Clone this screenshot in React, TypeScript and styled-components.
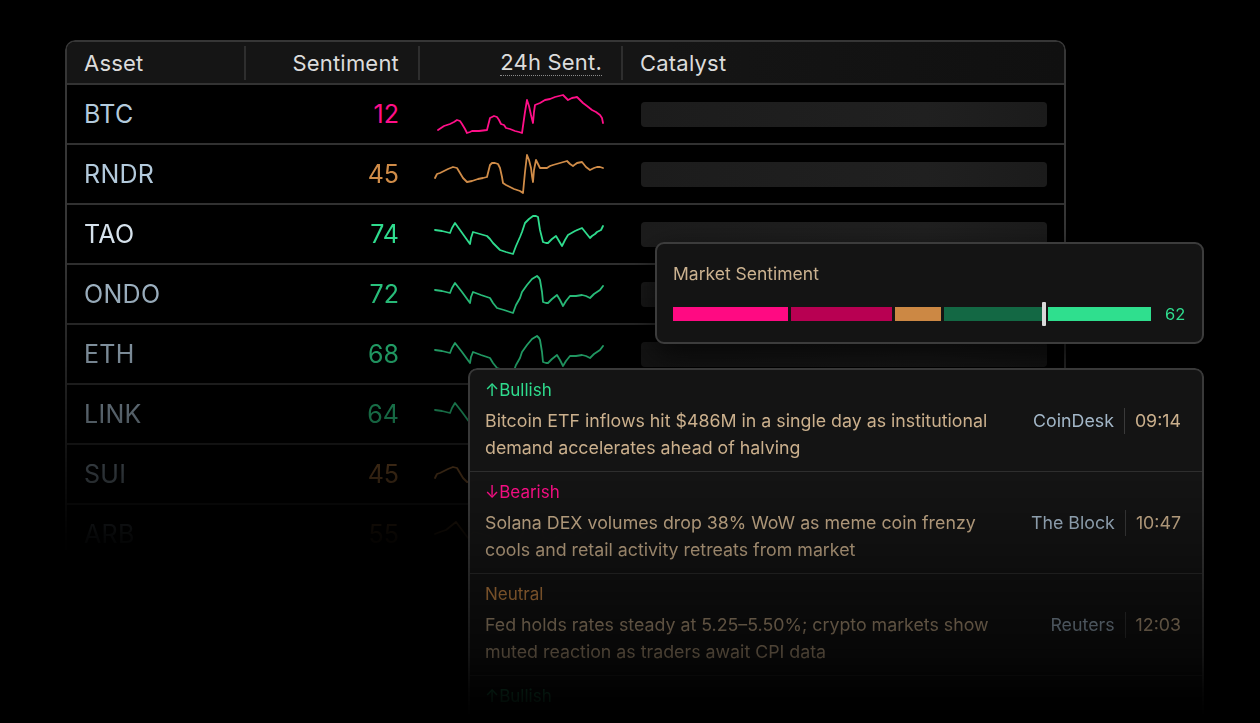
import { createGlobalStyle, styled } from "styled-components";

const GlobalStyle = createGlobalStyle`
  body {
    margin: 0;
    background: #000;
    font-family: "Inter", "Noto Sans", sans-serif;
  }
`;

type Tone = "bull" | "bear" | "neutral";

const toneColor: Record<Tone, string> = {
  bull: "#2fdc8e",
  bear: "#ff0f88",
  neutral: "#d08c48",
};

// sparkline shapes, viewBox 0 0 170 44
const btcLine =
  "4,38 7,36 10,34 13,33 16,32 20,30 23,28 26,29 28,32 31,37 33,41 36,40 38,39 45,39 53,38 55,30 56,26 60,24 63,25 65,28 67,32 70,33 72,36 76,37 81,39 85,40 88,41 91,20 93,8 95,14 97,23 99,31 100,20 101,13 106,11 111,8 116,7 121,5 125,4 129,3 132,6 134,8 138,6 143,5 146,8 149,11 153,14 158,18 162,20 166,23 168,26 169,31";
const rndrLine =
  "1,26 3,22 6,21 10,19 14,17 19,15 23,16 26,21 29,26 31,28 33,30 38,29 44,27 49,26 53,25 55,17 56,13 58,11 61,11 64,12 66,16 68,25 69,31 72,33 76,35 80,37 83,38 86,39 89,41 91,20 93,3 95,8 97,16 98,24 99,30 100,18 102,8 104,12 106,16 110,16 113,16 116,14 119,13 126,11 133,9 136,12 139,14 143,11 148,10 152,15 156,18 160,16 163,15 166,15 169,16";
const taoLine =
  "1,18 8,19 16,21 18,16 21,11 26,18 31,25 36,32 37,26 39,20 46,22 53,24 56,27 59,31 62,34 66,38 72,40 79,42 82,34 86,25 88,20 91,11 95,7 99,4 102,4 104,5 106,18 109,30 112,31 114,31 118,27 122,24 125,29 128,34 131,28 134,23 141,19 148,16 152,21 156,26 158,24 161,22 163,20 165,19 167,18 169,14";
const ondoLine =
  "1,18 8,19 16,21 18,16 21,11 28,20 36,31 37,25 39,20 47,23 56,26 59,31 63,36 70,38 79,41 82,33 86,26 88,20 93,13 98,7 103,4 105,6 106,8 108,20 109,30 112,31 114,31 118,27 123,23 126,28 129,34 132,29 136,24 142,24 148,23 152,24 156,26 160,22 163,20 166,18 169,14";
const arbLine =
  "1,22 6,20 12,18 17,14 22,10 28,18 34,26 37,22 40,20 48,22 55,24 60,28 64,32 72,34 80,36 84,29 88,22 92,15 95,10 100,8 104,6 107,16 110,26 114,27 118,28 124,24 130,20 136,22 142,24 149,20 156,16 162,17 169,18";

const assets: { sym: string; score: number; tone: Tone; line: string; bright?: boolean }[] = [
  { sym: "BTC", score: 12, tone: "bear", line: btcLine },
  { sym: "RNDR", score: 45, tone: "neutral", line: rndrLine },
  { sym: "TAO", score: 74, tone: "bull", line: taoLine, bright: true },
  { sym: "ONDO", score: 72, tone: "bull", line: ondoLine },
  { sym: "ETH", score: 68, tone: "bull", line: ondoLine },
  { sym: "LINK", score: 64, tone: "bull", line: ondoLine },
  { sym: "SUI", score: 45, tone: "neutral", line: rndrLine },
  { sym: "ARB", score: 55, tone: "neutral", line: arbLine },
];

const news: { tone: Tone; label: string; text?: string; source?: string; time?: string }[] = [
  {
    tone: "bull",
    label: "↑Bullish",
    text: "Bitcoin ETF inflows hit $486M in a single day as institutional demand accelerates ahead of halving",
    source: "CoinDesk",
    time: "09:14",
  },
  {
    tone: "bear",
    label: "↓Bearish",
    text: "Solana DEX volumes drop 38% WoW as meme coin frenzy cools and retail activity retreats from market",
    source: "The Block",
    time: "10:47",
  },
  {
    tone: "neutral",
    label: "Neutral",
    text: "Fed holds rates steady at 5.25–5.50%; crypto markets show muted reaction as traders await CPI data",
    source: "Reuters",
    time: "12:03",
  },
  { tone: "bull", label: "↑Bullish" },
];

const Page = styled.div`
  position: relative;
  width: 1260px;
  height: 723px;
  overflow: hidden;
  box-sizing: border-box;
  padding: 40px 0 0 65px;
  background: #000;
`;

const Table = styled.div`
  width: 1001px;
  box-sizing: border-box;
  border: 2px solid #363636;
  border-bottom: none;
  border-radius: 10px 10px 0 0;
  overflow: hidden;
  -webkit-mask-image: linear-gradient(
    to bottom,
    #000 0,
    #000 205px,
    rgba(0, 0, 0, 0.85) 255px,
    rgba(0, 0, 0, 0.68) 315px,
    rgba(0, 0, 0, 0.47) 375px,
    rgba(0, 0, 0, 0.24) 435px,
    rgba(0, 0, 0, 0.04) 495px,
    transparent 515px
  );
  mask-image: linear-gradient(
    to bottom,
    #000 0,
    #000 205px,
    rgba(0, 0, 0, 0.85) 255px,
    rgba(0, 0, 0, 0.68) 315px,
    rgba(0, 0, 0, 0.47) 375px,
    rgba(0, 0, 0, 0.24) 435px,
    rgba(0, 0, 0, 0.04) 495px,
    transparent 515px
  );
`;

const Header = styled.div`
  display: grid;
  grid-template-columns: 177px 174px 203px 1fr;
  align-items: center;
  height: 41px;
  background: linear-gradient(to right, #151515 60%, #101010);
  border-bottom: 2px solid #333;
`;

const HeadCell = styled.div<{ $align?: "left" | "right"; $divider?: boolean }>`
  display: flex;
  align-items: center;
  justify-content: ${(p) => (p.$align === "right" ? "flex-end" : "flex-start")};
  height: 34px;
  box-sizing: border-box;
  padding: ${(p) => (p.$align === "right" ? "0 19px 0 0" : "0 0 0 17px")};
  border-left: ${(p) => (p.$divider ? "2px solid #2e2e2e" : "none")};
  color: #dcdcdc;
  font-size: 22px;
  font-weight: 400;
  letter-spacing: 0.2px;
`;

const Dotted = styled.span`
  padding-bottom: 1px;
  border-bottom: 1.5px dotted #8a8a8a;
  line-height: 24px;
`;

const Row = styled.div`
  display: grid;
  grid-template-columns: 177px 174px 203px 1fr;
  align-items: center;
  height: 58px;
  border-bottom: 2px solid #313131;
  background: #000;
`;

const Symbol = styled.div<{ $bright?: boolean }>`
  padding-left: 17px;
  color: ${(p) => (p.$bright ? "#d6e2ec" : "#b3cadc")};
  font-size: 25px;
  letter-spacing: 0.3px;
`;

const Score = styled.div<{ $tone: Tone }>`
  padding-right: 19px;
  text-align: right;
  color: ${(p) => toneColor[p.$tone]};
  font-size: 25px;
`;

const SparkCell = styled.div`
  display: flex;
  justify-content: flex-end;
  padding-right: 17px;
`;

const CatalystCell = styled.div`
  padding: 0 17px 0 20px;
`;

const Placeholder = styled.div`
  height: 25px;
  border-radius: 4px;
  background: linear-gradient(to right, #1c1c1c, #202020 70%, #1b1b1b);
`;

const Sparkline = ({ points, tone }: { points: string; tone: Tone }) => (
  <svg width="170" height="44" viewBox="0 0 170 44" fill="none">
    <polyline
      points={points}
      stroke={toneColor[tone]}
      strokeWidth="1.8"
      strokeLinejoin="round"
      strokeLinecap="round"
    />
  </svg>
);

/* market sentiment popover */
const GaugeCard = styled.div`
  position: absolute;
  left: 655px;
  top: 242px;
  width: 549px;
  height: 102px;
  box-sizing: border-box;
  padding: 19px 16px 0;
  background: #141414;
  border: 2px solid #3c3c3c;
  border-radius: 9px;
  box-shadow: 0 10px 30px rgba(0, 0, 0, 0.7);
`;

const GaugeTitle = styled.div`
  color: #cbb290;
  font-size: 17.5px;
  line-height: 22px;
`;

const GaugeRow = styled.div`
  display: flex;
  align-items: center;
  height: 24px;
  margin-top: 17px;
`;

const Bar = styled.div`
  display: flex;
  align-items: center;
  gap: 3px;
  height: 24px;
`;

const Segment = styled.div<{ $w: number; $c: string }>`
  width: ${(p) => p.$w}px;
  height: 14px;
  background: ${(p) => p.$c};
`;

const Marker = styled.div`
  width: 4px;
  height: 24px;
  margin: 0 -1px 0 -3px;
  border-radius: 1px;
  background: #d9d9d9;
`;

const GaugeValue = styled.div`
  margin-left: 14px;
  color: #2fdc8e;
  font-size: 16.5px;
`;

/* catalyst feed */
const FeedCard = styled.div`
  position: absolute;
  left: 468px;
  top: 368px;
  width: 736px;
  height: 355px;
  box-sizing: border-box;
  background: #141414;
  border: 2px solid #393939;
  border-bottom: none;
  border-radius: 9px 9px 0 0;
  overflow: hidden;
  box-shadow: 0 -6px 30px rgba(0, 0, 0, 0.6);
  -webkit-mask-image: linear-gradient(
    to bottom,
    #000 0,
    #000 105px,
    rgba(0, 0, 0, 0.8) 170px,
    rgba(0, 0, 0, 0.55) 230px,
    rgba(0, 0, 0, 0.36) 285px,
    rgba(0, 0, 0, 0.1) 322px,
    transparent 348px
  );
  mask-image: linear-gradient(
    to bottom,
    #000 0,
    #000 105px,
    rgba(0, 0, 0, 0.8) 170px,
    rgba(0, 0, 0, 0.55) 230px,
    rgba(0, 0, 0, 0.36) 285px,
    rgba(0, 0, 0, 0.1) 322px,
    transparent 348px
  );
`;

const FeedItem = styled.div`
  padding: 9px 21px 10px 15px;
  border-bottom: 1px solid #2e2e2e;
`;

const Label = styled.div<{ $tone: Tone }>`
  color: ${(p) => toneColor[p.$tone]};
  font-size: 17px;
  line-height: 22px;
`;

const FeedBody = styled.div`
  display: flex;
  justify-content: space-between;
  align-items: flex-start;
  margin-top: 6px;
`;

const Headline = styled.div`
  width: 515px;
  color: #cbb08d;
  font-size: 17.8px;
  line-height: 27px;
`;

const Meta = styled.div`
  display: flex;
  align-items: center;
  height: 27px;
  font-size: 17.8px;
`;

const Source = styled.span`
  color: #a3b7c8;
`;

const MetaDivider = styled.span`
  width: 1px;
  height: 26px;
  margin: 0 10px;
  background: #3a3a3a;
`;

const Time = styled.span`
  color: #cbb08d;
`;

export default function App() {
  return (
    <>
      <GlobalStyle />
      <Page>
        <Table>
          <Header>
            <HeadCell>Asset</HeadCell>
            <HeadCell $align="right" $divider>
              Sentiment
            </HeadCell>
            <HeadCell $align="right" $divider>
              <Dotted>24h Sent.</Dotted>
            </HeadCell>
            <HeadCell $divider>Catalyst</HeadCell>
          </Header>
          {assets.map((a) => (
            <Row key={a.sym}>
              <Symbol $bright={a.bright}>{a.sym}</Symbol>
              <Score $tone={a.tone}>{a.score}</Score>
              <SparkCell>
                <Sparkline points={a.line} tone={a.tone} />
              </SparkCell>
              <CatalystCell>
                <Placeholder />
              </CatalystCell>
            </Row>
          ))}
        </Table>

        <GaugeCard>
          <GaugeTitle>Market Sentiment</GaugeTitle>
          <GaugeRow>
            <Bar>
              <Segment $w={115} $c="#ff0a82" />
              <Segment $w={101} $c="#b80052" />
              <Segment $w={46} $c="#cc8844" />
              <Segment $w={98} $c="#136844" />
              <Marker />
              <Segment $w={103} $c="#2fdf8e" />
            </Bar>
            <GaugeValue>62</GaugeValue>
          </GaugeRow>
        </GaugeCard>

        <FeedCard>
          {news.map((n, i) => (
            <FeedItem key={i}>
              <Label $tone={n.tone}>{n.label}</Label>
              {n.text && (
                <FeedBody>
                  <Headline>{n.text}</Headline>
                  <Meta>
                    <Source>{n.source}</Source>
                    <MetaDivider />
                    <Time>{n.time}</Time>
                  </Meta>
                </FeedBody>
              )}
            </FeedItem>
          ))}
        </FeedCard>
      </Page>
    </>
  );
}
